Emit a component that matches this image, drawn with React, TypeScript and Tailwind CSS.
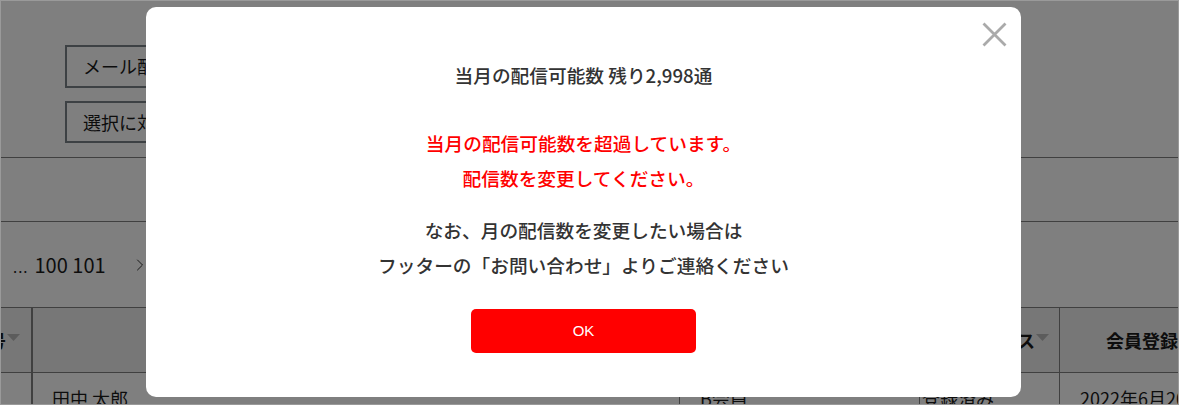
import { ChevronRight } from 'lucide-react';

const jp = '"Noto Sans CJK JP", "Noto Sans", sans-serif';

function SortArrow() {
  return (
    <svg viewBox="0 0 13 7" className="w-[13px] h-[7px] ml-[1px] mb-[6px] shrink-0" fill="#b8b8b8">
      <path d="M0 0 H13 L6.5 7 Z" />
    </svg>
  );
}

export default function App() {
  return (
    <div
      className="relative w-[1179px] h-[405px] overflow-hidden border border-[#9a9a9a] bg-white text-[#1a1a1a]"
      style={{ fontFamily: jp }}
    >
      {/* background page */}
      <div className="flex flex-col">
        <div className="flex flex-col gap-[13px] pl-[64px] pt-[44px] h-[156px]">
          <button className="w-[240px] h-[43px] border-2 border-[#7b8289] text-left pl-[16px] text-[18px]">
            メール配信設定
          </button>
          <button className="w-[240px] h-[42px] border-2 border-[#7b8289] text-left pl-[16px] text-[18px]">
            選択に対してメール配信
          </button>
        </div>
        <div className="h-px bg-[#808080]" />
        <div className="h-[63px]" />
        <div className="h-px bg-[#808080]" />
        <div className="h-[85px] flex items-center pl-[12px] text-[20px]">
          <span className="text-[15px] tracking-[1px] mt-[6px] mr-[6px]">...</span>
          <span>100 101</span>
          <ChevronRight className="w-[20px] h-[28px] ml-[24px] text-[#333]" strokeWidth={1.2} />
        </div>
        <div className="h-px bg-[#808080]" />
        <div className="flex h-[64px] bg-[#eeeeee] font-bold text-[18px] whitespace-nowrap">
          <div className="w-[32px] shrink-0 flex items-center justify-end pr-[11px] border-r-2 border-[#808080]">
            号<SortArrow />
          </div>
          <div className="w-[647px] shrink-0 border-r border-[#808080]" />
          <div className="w-[240px] shrink-0 border-r border-[#808080]" />
          <div className="w-[140px] shrink-0 flex items-center justify-end pr-[10px] border-r border-[#808080]">
            ス<SortArrow />
          </div>
          <div className="flex-1 min-w-0 flex items-center pl-[46px]">会員登録日</div>
        </div>
        <div className="h-px bg-[#808080]" />
        <div className="flex h-[40px] text-[18px] whitespace-nowrap">
          <div className="w-[32px] shrink-0 border-r-2 border-[#808080]" />
          <div className="w-[647px] shrink-0 pl-[19px] pt-[12px] border-r border-[#808080]">田中 太郎</div>
          <div className="w-[240px] shrink-0 pl-[20px] pt-[12px] border-r border-[#808080]">B会員</div>
          <div className="w-[140px] shrink-0 pl-[2px] pt-[12px] border-r border-[#808080]">登録済み</div>
          <div className="flex-1 min-w-0 pl-[20px] pt-[12px]">2022年6月20日</div>
        </div>
      </div>

      {/* overlay + modal */}
      <div className="absolute inset-0 bg-black/50">
        <div className="ml-[145px] mt-[6px] w-[875px] h-[390px] bg-white rounded-[10px] relative pt-[50px] text-[#333]">
          <button className="absolute right-[14px] top-[15px] w-[25px] h-[25px]">
            <svg viewBox="0 0 25 25" className="w-[25px] h-[25px]" stroke="#aaaaaa" strokeWidth="2.8" fill="none">
              <path d="M1.5 1.5 L23.5 23.5 M23.5 1.5 L1.5 23.5" />
            </svg>
          </button>
          <p className="text-center text-[18.7px] font-medium leading-[35px]">当月の配信可能数 残り2,998通</p>
          <div className="mt-[33px] text-center text-[18.7px] font-medium leading-[35px] text-[#ff0000]">
            <p>当月の配信可能数を超過しています。</p>
            <p>配信数を変更してください。</p>
          </div>
          <div className="mt-[17px] text-center text-[18.7px] font-medium leading-[35px]">
            <p>なお、月の配信数を変更したい場合は</p>
            <p>フッターの「お問い合わせ」よりご連絡ください</p>
          </div>
          <div className="mt-[27px] flex justify-center">
            <button
              className="w-[225px] h-[44px] rounded-[5px] bg-[#ff0000] text-white text-[15px]"
              style={{ fontFamily: '"Liberation Sans", Arial, sans-serif' }}
            >
              OK
            </button>
          </div>
        </div>
      </div>
    </div>
  );
}
